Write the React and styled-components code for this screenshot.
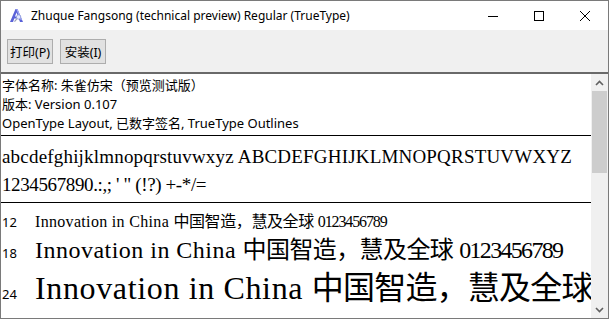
import React from "react";
import styled, { createGlobalStyle } from "styled-components";

const Global = createGlobalStyle`
  html, body { margin: 0; padding: 0; background: #fff; overflow: hidden; }
  * { box-sizing: border-box; }
`;

const UI = `"Noto Sans", "Noto Sans CJK SC", sans-serif`;
const SERIF = `"Liberation Serif", "Noto Sans CJK SC", serif`;

const Window = styled.div`
  width: 609px;
  height: 319px;
  border: 1px solid #7a7a7a;
  display: flex;
  flex-direction: column;
  background: #fff;
  font-family: ${UI};
  color: #000;
  overflow: hidden;
`;

const TitleBar = styled.div`
  height: 29px;
  flex: none;
  display: flex;
  align-items: center;
  background: #fff;
  padding-left: 8px;
`;

const TitleText = styled.span`
  font-size: 12px;
  margin-left: 7px;
  flex: 1;
  white-space: nowrap;
`;

const Controls = styled.div`
  display: flex;
  height: 100%;
`;

const ControlBtn = styled.div`
  width: 46px;
  height: 100%;
  display: flex;
  align-items: center;
  justify-content: center;
`;

const Toolbar = styled.div`
  height: 42px;
  flex: none;
  background: #f0f0f0;
  display: flex;
  align-items: center;
  gap: 7px;
  padding: 0 0 0 6px;
`;

const Button = styled.button`
  height: 25px;
  width: 46px;
  padding: 0;
  margin-top: 1px;
  background: #e1e1e1;
  border: 1px solid #adadad;
  font-family: ${UI};
  font-size: 12.5px;
  color: #000;
  display: flex;
  align-items: center;
  justify-content: center;
  white-space: nowrap;
`;

const Divider = styled.div`
  height: 2px;
  flex: none;
  background: #696969;
`;

const Body = styled.div`
  flex: 1;
  display: flex;
  min-height: 0;
`;

const Main = styled.div`
  flex: 1;
  min-width: 0;
  overflow: hidden;
`;

const Info = styled.div`
  padding: 2px 0 2px 1px;
  font-size: 13px;
  line-height: 19px;
  white-space: nowrap;
`;

const Rule = styled.div`
  height: 1px;
  background: #000;
`;

const Sample = styled.div`
  padding: 7px 0 3px 1px;
  font-family: ${SERIF};
  font-size: 19px;
  line-height: 28px;
  white-space: nowrap;
`;

const SampleLine = styled.div`
  letter-spacing: ${(p) => p.$ls}em;
`;

const Rows = styled.div`
  padding: 5px 0 0 1px;
`;

const Row = styled.div`
  display: flex;
  align-items: baseline;
  height: ${(p) => p.$h}px;
  line-height: ${(p) => p.$h}px;
  white-space: nowrap;
`;

const Size = styled.span`
  width: 33px;
  flex: none;
  font-family: ${UI};
  font-size: 13px;
`;

const Specimen = styled.span`
  font-family: ${SERIF};
  font-size: ${(p) => p.$size}px;
`;

const Latin = styled.span`
  letter-spacing: 0.02em;
`;

const Han = styled.span`
  letter-spacing: -0.025em;
`;

const Digits = styled.span`
  letter-spacing: -0.07em;
`;

const Scrollbar = styled.div`
  width: 17px;
  flex: none;
  background: #f0f0f0;
  display: flex;
  flex-direction: column;
`;

const Arrow = styled.div`
  height: 17px;
  flex: none;
  display: flex;
  align-items: center;
  justify-content: center;
`;

const Track = styled.div`
  flex: 1;
  padding: 0 1px;
`;

const Thumb = styled.div`
  height: 82px;
  background: #cdcdcd;
`;

const FontIcon = () => (
  <svg width="15" height="15" viewBox="0 0 15 15">
    <path d="M6.5 1 L1 14 L4 14 L5.3 10.5 L9.7 10.5 L11 14 L14 14 L8.5 1 Z" fill="#5a62d8" />
    <path d="M7.5 4.5 L6 8.5 L9 8.5 Z" fill="#fff" />
    <path d="M7.2 1 L8.5 1 L13 12 L11.6 12 Z" fill="#a3abf3" />
    <circle cx="9.6" cy="9" r="2.2" fill="#dfe6ff" stroke="#8c98d8" strokeWidth="0.8" />
    <path d="M8 10.6 L5.5 13.6" stroke="#9aa0b8" strokeWidth="1.2" />
  </svg>
);

const Chevron = ({ down }) => (
  <svg width="9" height="6" viewBox="0 0 9 6">
    <path
      d={down ? "M1 1 L4.5 4.5 L8 1" : "M1 5 L4.5 1.5 L8 5"}
      fill="none"
      stroke="#606060"
      strokeWidth="1.6"
    />
  </svg>
);

const SpecimenText = () => (
  <>
    <Latin>Innovation in China </Latin>
    <Han>中国智造，慧及全球</Han> <Digits>0123456789</Digits>
  </>
);

export default function App() {
  return (
    <>
      <Global />
      <Window>
        <TitleBar>
          <FontIcon />
          <TitleText>Zhuque Fangsong (technical preview) Regular (TrueType)</TitleText>
          <Controls>
            <ControlBtn>
              <svg width="10" height="10" viewBox="0 0 10 10">
                <path d="M0 5.5 H10" stroke="#000" strokeWidth="1" />
              </svg>
            </ControlBtn>
            <ControlBtn>
              <svg width="10" height="10" viewBox="0 0 10 10">
                <rect x="0.5" y="0.5" width="9" height="9" fill="none" stroke="#000" strokeWidth="1" />
              </svg>
            </ControlBtn>
            <ControlBtn>
              <svg width="10" height="10" viewBox="0 0 10 10">
                <path d="M0 0 L10 10 M10 0 L0 10" stroke="#000" strokeWidth="1" />
              </svg>
            </ControlBtn>
          </Controls>
        </TitleBar>
        <Toolbar>
          <Button>打印(P)</Button>
          <Button>安装(I)</Button>
        </Toolbar>
        <Divider />
        <Body>
          <Main>
            <Info>
              <div>字体名称: 朱雀仿宋（预览测试版）</div>
              <div>版本: Version 0.107</div>
              <div>OpenType Layout, 已数字签名, TrueType Outlines</div>
            </Info>
            <Rule />
            <Sample>
              <SampleLine $ls={0.01}>abcdefghijklmnopqrstuvwxyz ABCDEFGHIJKLMNOPQRSTUVWXYZ</SampleLine>
              <SampleLine $ls={-0.02}>1234567890.:,; ' " (!?) +-*/=</SampleLine>
            </Sample>
            <Rule />
            <Rows>
              <Row $h={27}>
                <Size>12</Size>
                <Specimen $size={16}><SpecimenText /></Specimen>
              </Row>
              <Row $h={31}>
                <Size>18</Size>
                <Specimen $size={24}><SpecimenText /></Specimen>
              </Row>
              <Row $h={44}>
                <Size>24</Size>
                <Specimen $size={32}><SpecimenText /></Specimen>
              </Row>
            </Rows>
          </Main>
          <Scrollbar>
            <Arrow>
              <Chevron />
            </Arrow>
            <Track>
              <Thumb />
            </Track>
            <Arrow>
              <Chevron down />
            </Arrow>
          </Scrollbar>
        </Body>
      </Window>
    </>
  );
}
